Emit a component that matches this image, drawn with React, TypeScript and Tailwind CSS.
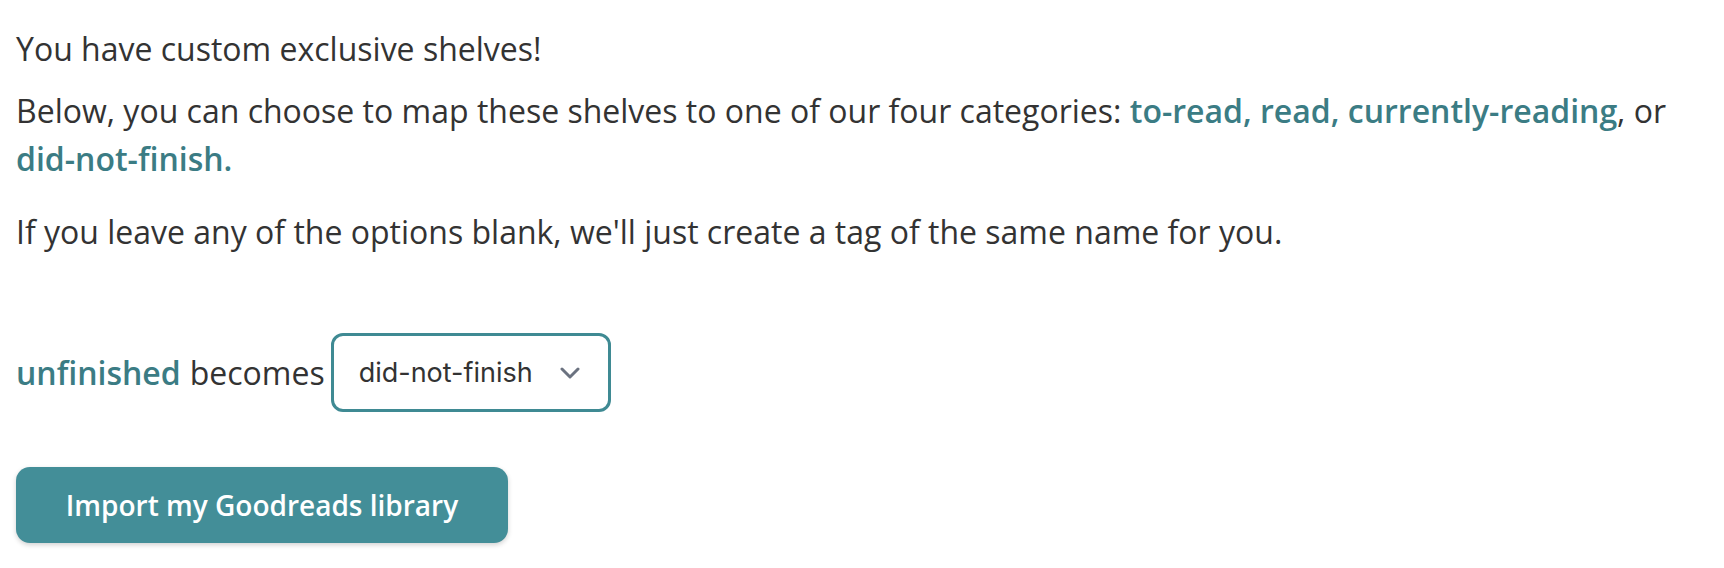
import React from "react";

export default function App() {
  return (
    <div className="min-h-[568px] w-full bg-white pl-4 pt-[25px] font-['Open_Sans',sans-serif] text-[32px] leading-[48px] text-[#333333]">
      <p>You have custom exclusive shelves!</p>
      <p className="mt-[14px] max-w-[1690px]">
        Below, you can choose to map these shelves to one of our four categories:{" "}
        <span className="font-semibold text-[#3b7c84]">to-read, read, currently-reading</span>, or{" "}
        <span className="font-semibold text-[#3b7c84]">did-not-finish.</span>
      </p>
      <p className="mt-[25px]">If you leave any of the options blank, we'll just create a tag of the same name for you.</p>
      <div className="mt-[77px] flex items-center">
        <span className="font-semibold text-[#3b7c84]">unfinished</span>
        <span className="ml-[9px]">becomes</span>
        <div className="ml-[6px] flex h-[79px] w-[280px] items-center justify-between rounded-[12px] border-[3px] border-[#3f8a93] bg-white pl-[25px] pr-[28px] font-['Inter',sans-serif] text-[27px] text-[#333333]">
          <span>did-not-finish</span>
          <svg width="20" height="12" viewBox="0 0 20 12" fill="none">
            <path d="M2 2 L10 10 L18 2" stroke="#6b7280" strokeWidth="3" strokeLinecap="round" strokeLinejoin="round" />
          </svg>
        </div>
      </div>
      <button className="mt-[55px] flex h-[76px] w-[492px] items-center justify-center rounded-[14px] bg-[#438e98] text-[28px] font-semibold text-white shadow-[0_2px_5px_rgba(0,0,0,0.18)]">
        Import my Goodreads library
      </button>
    </div>
  );
}
